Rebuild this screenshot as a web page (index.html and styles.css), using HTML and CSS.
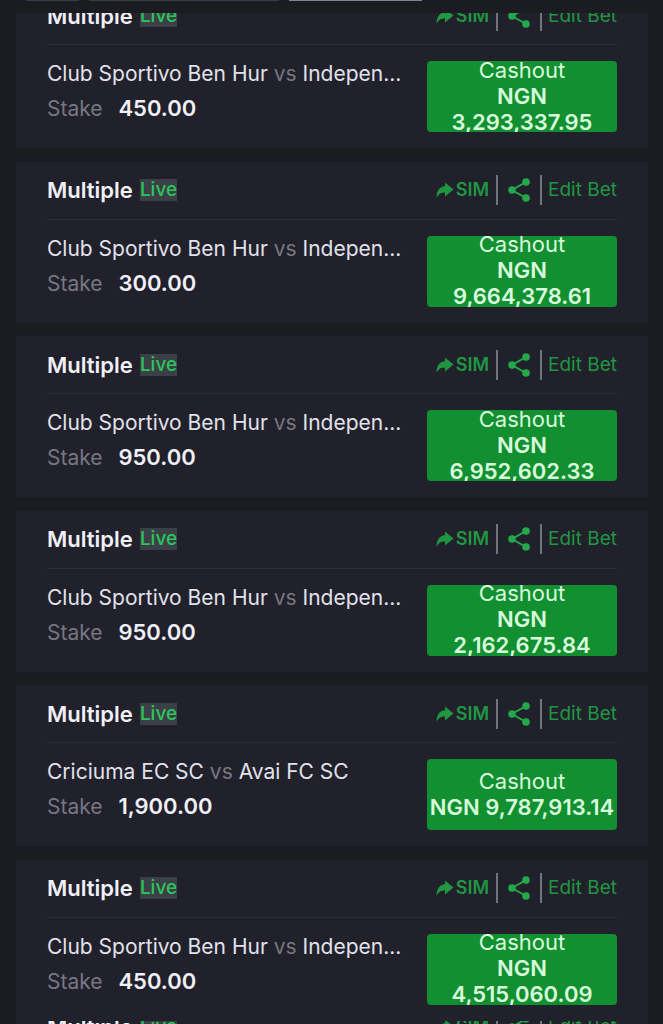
FILE: index.html
```
<!DOCTYPE html>
<html lang="en">
<head>
    <meta charset="UTF-8">
    <meta name="viewport" content="width=device-width, initial-scale=1.0">
    <title>Open Bets</title>
    <link rel="stylesheet" href="styles.css">
</head>
<body>
    <svg class="sprite" aria-hidden="true">
        <symbol id="icon-forward" viewBox="0 0 18 16">
            <path d="M9 0.500 L17.500 7.500 L9 14.500 V10.500 C5.500 10.300 2.800 11.500 0.600 15.500 C0.600 9 3.500 4.600 9 4.300 Z" fill="currentColor"/>
        </symbol>
        <symbol id="icon-share" viewBox="0 0 22 24">
            <path d="M18 4 L4 12 L18 20" fill="none" stroke="currentColor" stroke-width="2"/>
            <circle cx="18" cy="4" r="3.800" fill="currentColor"/>
            <circle cx="4" cy="12" r="3.800" fill="currentColor"/>
            <circle cx="18" cy="20" r="3.800" fill="currentColor"/>
        </symbol>
    </svg>

    <div class="tabs">
        <span class="tab tab-small"></span>
        <span class="tab tab-wide"></span>
        <span class="tab tab-active"></span>
    </div>

    <main class="bets"></main>
    <div class="next-bet"></div>

    <script>
        const bets = [
            { home: 'Club Sportivo Ben Hur', away: 'Indepen...', stake: '450.00', cashout: '3,293,337.95' },
            { home: 'Club Sportivo Ben Hur', away: 'Indepen...', stake: '300.00', cashout: '9,664,378.61' },
            { home: 'Club Sportivo Ben Hur', away: 'Indepen...', stake: '950.00', cashout: '6,952,602.33' },
            { home: 'Club Sportivo Ben Hur', away: 'Indepen...', stake: '950.00', cashout: '2,162,675.84' },
            { home: 'Criciuma EC SC', away: 'Avai FC SC', stake: '1,900.00', cashout: '9,787,913.14', oneLine: true },
            { home: 'Club Sportivo Ben Hur', away: 'Indepen...', stake: '450.00', cashout: '4,515,060.09' }
        ];

        const header = `
            <header class="bet-header">
                <h2>Multiple</h2>
                <span class="live">Live</span>
                <div class="actions">
                    <button class="sim"><svg width="18" height="16" aria-hidden="true"><use href="#icon-forward"/></svg>SIM</button>
                    <button class="share" aria-label="Share"><svg width="22" height="24" aria-hidden="true"><use href="#icon-share"/></svg></button>
                    <button class="edit">Edit Bet</button>
                </div>
            </header>`;

        document.querySelector('.bets').innerHTML = bets.map(bet => `
            <article class="bet">
                ${header}
                <div class="bet-body">
                    <div class="details">
                        <p class="event">${bet.home} <span class="vs">vs</span> ${bet.away}</p>
                        <p class="stake">Stake <strong>${bet.stake}</strong></p>
                    </div>
                    <button class="cashout">
                        <span>Cashout</span>
                        <strong>NGN${bet.oneLine ? ' ' : '<br>'}${bet.cashout}</strong>
                    </button>
                </div>
            </article>`).join('');

        document.querySelector('.next-bet').innerHTML = header;
    </script>
</body>
</html>
```
FILE: styles.css
```
:root {
    --page-bg: #1b1c22;
    --card-bg: #21212b;
    --line: #2e2e37;
    --green: #128f30;
    --green-text: #209643;
    --text: #e2e2ec;
    --muted: #777782;
}

* {
    box-sizing: border-box;
}

body {
    margin: 0;
    height: 100vh;
    display: flex;
    flex-direction: column;
    overflow: hidden;
    background: var(--page-bg);
    color: var(--text);
    font-family: Inter, "Liberation Sans", sans-serif;
    font-size: 22px;
}

h2,
p {
    margin: 0;
}

button {
    padding: 0;
    border: none;
    background: none;
    color: inherit;
    font: inherit;
    cursor: pointer;
}

.sprite {
    display: none;
}

/* bottom edge of the filter tabs */
.tabs {
    flex: none;
    display: flex;
    gap: 10px;
    height: 13px;
    padding-left: 26px;
}

.tab {
    height: 1px;
    background: #3a3a43;
}

.tab-small {
    width: 53px;
}

.tab-wide {
    width: 190px;
}

.tab-active {
    width: 133px;
    background: #85858d;
}

.bets {
    flex: 1;
    min-height: 0;
    display: flex;
    flex-direction: column;
    justify-content: space-between;
    padding: 0 15px 0 16px;
}

.bet {
    flex: none;
    background: var(--card-bg);
    padding: 0 31px;
}

/* first bet is partly scrolled under the tabs */
.bet:first-child {
    height: 135px;
    display: flex;
    flex-direction: column;
    justify-content: flex-end;
    overflow: hidden;
}

.bet-header {
    flex: none;
    display: flex;
    align-items: center;
    gap: 7px;
    height: 58px;
    border-bottom: 1px solid var(--line);
}

.bet-header h2 {
    color: #f0f0f8;
    font-size: 22px;
    line-height: 26px;
    font-weight: 600;
}

.live {
    background: #3b3f46;
    color: #2cc45c;
    font-size: 19px;
    line-height: 22px;
    font-weight: 500;
}

.actions {
    display: flex;
    align-items: center;
    margin-left: auto;
    color: var(--green-text);
    line-height: 30px;
}

.actions button {
    display: flex;
    align-items: center;
    height: 30px;
}

.sim {
    gap: 2px;
    font-size: 18px;
    font-weight: 600;
}

.actions .sim {
    padding-right: 7px;
}

.actions .share {
    padding: 0 10px;
    border: solid #73737d;
    border-width: 0 2px;
    color: #24a84a;
}

.actions .edit {
    padding-left: 6px;
    font-size: 19px;
}

.bet-body {
    flex: none;
    display: flex;
    justify-content: space-between;
    gap: 16px;
    padding: 16px 0;
}

.details {
    display: flex;
    flex-direction: column;
    gap: 8px;
    min-width: 0;
    font-size: 21px;
    line-height: 26px;
    white-space: nowrap;
}

.vs,
.stake {
    color: var(--muted);
}

.stake strong {
    margin-left: 10px;
    color: #f0f0f8;
    font-size: 22px;
    font-weight: 600;
}

.bet-body .cashout {
    flex: none;
    display: flex;
    flex-direction: column;
    align-items: center;
    justify-content: center;
    width: 190px;
    height: 71px;
    padding-bottom: 2px;
    border-radius: 4px;
    overflow: hidden;
    background: var(--green);
    color: #d8fbdc;
    line-height: 26px;
    white-space: nowrap;
}

.cashout strong {
    font-weight: 600;
}

/* top of the following bet */
.next-bet {
    flex: none;
    height: 3px;
    margin: 0 15px 0 16px;
    padding: 0 31px;
    overflow: hidden;
    background: var(--card-bg);
}

.next-bet .bet-header {
    height: 12px;
}
```
